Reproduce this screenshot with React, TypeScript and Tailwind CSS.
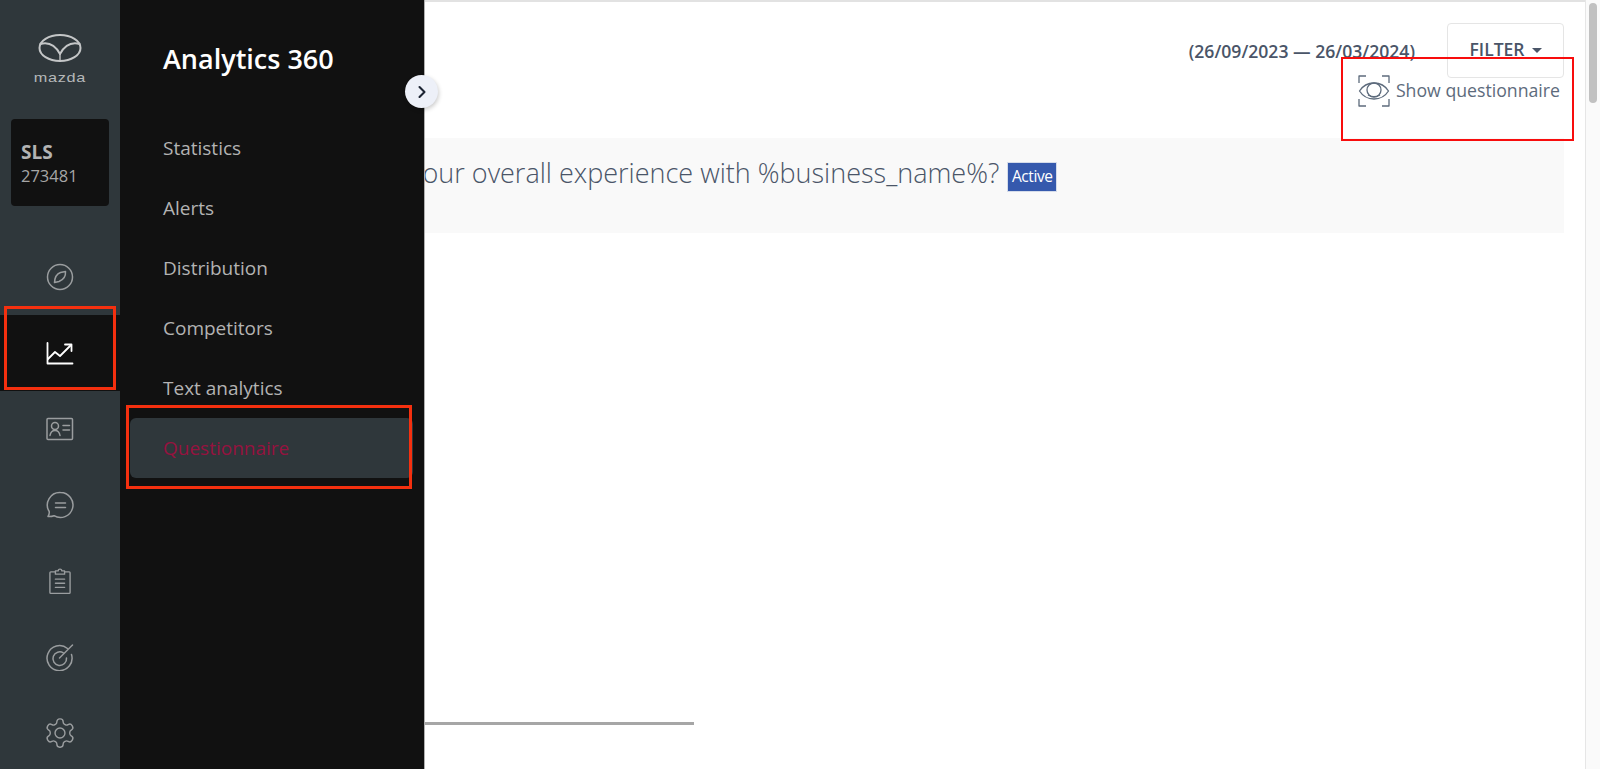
import { ChevronRight } from "lucide-react";
import type { ReactNode } from "react";

const iconProps = {
  fill: "none",
  stroke: "currentColor",
  strokeWidth: 1.5,
  strokeLinecap: "round" as const,
  strokeLinejoin: "round" as const,
};

const MazdaLogo = () => (
  <svg width="46" height="30" viewBox="0 0 46 30" {...iconProps} strokeWidth={2} className="text-[#c4c6c7]">
    <ellipse cx="23" cy="15" rx="20.5" ry="13" />
    <path d="M3.500 11C11 9 18 12 23 21c5-9 12-12 19.500-10" />
    <path d="M23 21l0 6" strokeWidth={1.4} />
  </svg>
);

const CompassIcon = () => (
  <svg width="28" height="28" viewBox="0 0 28 28" {...iconProps}>
    <circle cx="14" cy="14" r="12.500" />
    <path d="M19.500 8.500c.3 4-1.500 8-6.500 10l-4.500 1c.2-4.500 2-8.500 6-10z" />
  </svg>
);

const ChartIcon = () => (
  <svg width="28" height="24" viewBox="0 0 28 24" {...iconProps} strokeWidth={1.8}>
    <path d="M1.500 2v20.500h25" />
    <path d="M2 18l7-7 5 4 11-11" />
    <path d="M19 3.500h6.500V10" />
  </svg>
);

const ContactIcon = () => (
  <svg width="28" height="24" viewBox="0 0 28 24" {...iconProps}>
    <rect x="1" y="1.500" width="25.500" height="21" rx="1" />
    <circle cx="9" cy="9" r="3.500" />
    <path d="M4 18.500c.5-3 2.500-5 5-5s4.500 2 5 5" />
    <path d="M17 8.500h6.500M17 13h6.500" />
  </svg>
);

const ChatIcon = () => (
  <svg width="28" height="28" viewBox="0 0 28 28" {...iconProps}>
    <path d="M14.500 1.500a12.500 12.500 0 1 1-6.500 23.200c-2 .8-4 1-6 .8 1-1.500 1.500-3 1.200-5A12.500 12.500 0 0 1 14.500 1.500z" />
    <path d="M9.500 12h10M9.500 16.500h10" />
  </svg>
);

const ClipboardIcon = () => (
  <svg width="22" height="28" viewBox="0 0 24 30" {...iconProps}>
    <path d="M7 5H2a1 1 0 0 0-1 1v21.500a1 1 0 0 0 1 1h20a1 1 0 0 0 1-1V6a1 1 0 0 0-1-1h-5" />
    <path d="M7 7.500V4h3a2 2 0 0 1 4 0h3v3.500z" />
    <path d="M7 13h10M7 17.500h10M7 22h10" />
  </svg>
);

const TargetIcon = () => (
  <svg width="28" height="28" viewBox="0 0 28 28" {...iconProps}>
    <path d="M21.500 5.500a12.500 12.500 0 1 0 4 6" />
    <path d="M17.500 10a6.800 6.800 0 1 0 3 5" />
    <path d="M13.500 15L26.500 2" />
  </svg>
);

const GearIcon = () => (
  <svg width="34" height="34" viewBox="0 0 24 24" {...iconProps} strokeWidth={1}>
    <path d="M12.220 2h-.44a2 2 0 0 0-2 2v.18a2 2 0 0 1-1 1.730l-.43.250a2 2 0 0 1-2 0l-.15-.080a2 2 0 0 0-2.730.730l-.220.380a2 2 0 0 0 .730 2.730l.150.100a2 2 0 0 1 1 1.720v.510a2 2 0 0 1-1 1.740l-.150.090a2 2 0 0 0-.730 2.730l.220.380a2 2 0 0 0 2.730.730l.150-.080a2 2 0 0 1 2 0l.430.250a2 2 0 0 1 1 1.730V20a2 2 0 0 0 2 2h.44a2 2 0 0 0 2-2v-.18a2 2 0 0 1 1-1.730l.430-.250a2 2 0 0 1 2 0l.150.080a2 2 0 0 0 2.730-.730l.220-.390a2 2 0 0 0-.730-2.730l-.150-.080a2 2 0 0 1-1-1.740v-.500a2 2 0 0 1 1-1.740l.150-.090a2 2 0 0 0 .730-2.730l-.220-.380a2 2 0 0 0-2.730-.730l-.150.080a2 2 0 0 1-2 0l-.430-.250a2 2 0 0 1-1-1.730V4a2 2 0 0 0-2-2z" />
    <circle cx="12" cy="12" r="3.500" />
  </svg>
);

const ScanEyeIcon = () => (
  <svg width="32" height="32" viewBox="0 0 32 32" {...iconProps} strokeWidth={1.3} strokeLinecap="butt" className="text-[#5d6b7c]">
    <path d="M1 8V1h7M24 1h7v7M1 24v7h7M24 31h7v-7" />
    <path d="M1.500 16C5 10.500 10 8 16 8s11 2.500 14.500 8C27 21.500 22 24 16 24S5 21.500 1.500 16z" />
    <circle cx="16" cy="15" r="7" />
    <path d="M10 20c3.500 2 8.500 2 12 0" />
  </svg>
);

const navIcons: { icon: ReactNode; active?: boolean }[] = [
  { icon: <CompassIcon /> },
  { icon: <ChartIcon />, active: true },
  { icon: <ContactIcon /> },
  { icon: <ChatIcon /> },
  { icon: <ClipboardIcon /> },
  { icon: <TargetIcon /> },
  { icon: <GearIcon /> },
];

const menuItems = ["Statistics", "Alerts", "Distribution", "Competitors", "Text analytics"];

const App = () => {
  return (
    <div className="relative flex h-[769px] w-[1600px] overflow-hidden bg-white font-['Open_Sans',sans-serif]">
      {/* icon rail */}
      <aside className="flex w-[120px] shrink-0 flex-col bg-[#2f373b]">
        <div className="flex h-[119px] shrink-0 flex-col items-center pt-[33px]">
          <MazdaLogo />
          <span className="mt-[10px] scale-x-[1.25] font-['Liberation_Sans',sans-serif] text-[13px] leading-[10px] tracking-[0.04em] text-[#b5b8b9]">
            mazda
          </span>
        </div>
        <div className="mx-[11px] flex h-[87px] shrink-0 flex-col justify-center rounded bg-[#111111] pl-[10px]">
          <span className="text-[19px] leading-[26px] font-bold text-[#b3b3b3]">SLS</span>
          <span className="text-[16.5px] leading-[22px] text-[#a6a6a6]">273481</span>
        </div>
        <nav className="mt-[33px] flex flex-col">
          {navIcons.map((item, i) => (
            <div
              key={i}
              className={
                item.active
                  ? "relative flex h-[76px] shrink-0 items-center justify-center bg-[#111111] text-white"
                  : "flex h-[76px] shrink-0 items-center justify-center text-[#9a9d9f]"
              }
            >
              {item.icon}
              {item.active && (
                <div className="absolute -top-[9px] right-[4px] bottom-[1px] left-[4px] border-[3px] border-[#f5300f]" />
              )}
            </div>
          ))}
        </nav>
      </aside>

      {/* main content, partly covered by the menu panel */}
      <main className="flex min-w-0 flex-1 flex-col border-t-2 border-[#e2e2e2] pl-[304px]">
        <div className="flex justify-end pt-[21px] pr-[21px]">
          <span className="mt-[16px] text-[17.6px] leading-[24px] font-semibold text-[#4a5568]">
            (26/09/2023 — 26/03/2024)
          </span>
          <button
            type="button"
            className="ml-[32px] flex h-[55px] w-[117px] items-center justify-center gap-[7px] rounded border border-[#e5e5e5] pb-[2px] text-[17.5px] font-semibold text-[#4a5568]"
          >
            FILTER
            <span className="mt-[2px] h-0 w-0 border-x-[5px] border-t-[5px] border-x-transparent border-t-[#4a5568]" />
          </button>
        </div>
        <div className="relative -mt-[3px] flex justify-end pr-[25px]">
          <div className="flex items-center gap-[6px]">
            <ScanEyeIcon />
            <span className="-mt-[2px] text-[17.7px] leading-[24px] text-[#5d6b7c]">Show questionnaire</span>
          </div>
          <div className="absolute -top-[18px] right-[11px] h-[84px] w-[233px] border-[2px] border-[#f80d0d]" />
        </div>
        <div className="mt-[31px] mr-[21px] -ml-[304px] flex h-[95px] bg-[#f9f9f9] pt-[17px] pl-[41px]">
          <span className="text-[27px] leading-[36px] font-light whitespace-nowrap text-[#4a5568]">
            How would you rate your overall experience with %business_name%?
          </span>
          <span className="mt-[7px] ml-[8px] flex h-[30px] w-[50px] items-center justify-center border border-[#d5dcea] bg-[#3559ad] text-[15.5px] tracking-tight text-white">
            Active
          </span>
        </div>
        <div className="mt-[489px] h-[3px] w-[270px] bg-[#a6a6a6]" />
      </main>

      {/* scrollbar */}
      <div className="flex w-[15px] shrink-0 justify-center border-l border-[#e6e6e6] bg-[#fafafa] pt-[3px]">
        <div className="h-[100px] w-[8px] rounded-full bg-[#c1c1c1]" />
      </div>

      {/* menu panel */}
      <div className="absolute top-0 bottom-0 left-[120px] w-[305px] border-r border-[#b0b0b0] bg-[#111111]">
        <h1 className="mt-[41px] ml-[43px] text-[27px] leading-[36px] font-semibold text-white">Analytics 360</h1>
        <button
          type="button"
          className="absolute top-[75px] -right-[14px] flex h-[33px] w-[33px] items-center justify-center rounded-full bg-[#edf0f8] text-[#1c2433] shadow-[1px_2px_4px_rgba(0,0,0,0.2)]"
        >
          <ChevronRight size={20} strokeWidth={2.5} />
        </button>
        <ul className="mt-[41px] flex flex-col">
          {menuItems.map((item) => (
            <li key={item} className="flex h-[60px] items-center pl-[43px] text-[19px] text-[#b3b3b3]">
              {item}
            </li>
          ))}
          <li className="relative mr-[11px] ml-[10px] flex h-[60px] items-center rounded-md bg-[#2f373b] pl-[33px] text-[19px] text-[#96123f]">
            Questionnaire
            <div className="absolute -top-[13px] right-[1px] -bottom-[11px] -left-[4px] border-[3px] border-[#f5300f]" />
          </li>
        </ul>
      </div>
    </div>
  );
};

export default App;
